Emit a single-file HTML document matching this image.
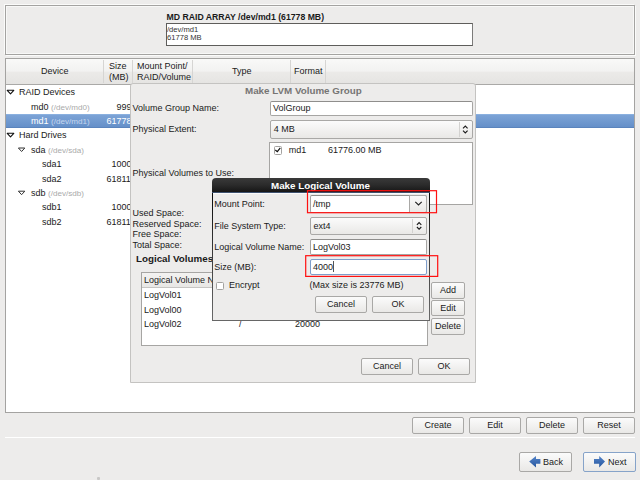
<!DOCTYPE html>
<html><head><meta charset="utf-8">
<style>
*{margin:0;padding:0;box-sizing:border-box}
html,body{width:640px;height:480px;overflow:hidden;background:#edeceb;font-family:"Liberation Sans",sans-serif;font-size:9px;color:#1a1a1a}
.a{position:absolute}
.t{position:absolute;white-space:pre;line-height:10px}
.btn{position:absolute;border:1px solid #a9a8a6;border-radius:2px;background:linear-gradient(#fbfbfb,#e9e8e6);text-align:center;line-height:15px;color:#1a1a1a}
.entry{position:absolute;background:#fff;border:1px solid #a6a5a3;border-radius:2px;border-top-color:#8f8e8c}
.combo{position:absolute;border:1px solid #a9a8a6;border-radius:2px;background:linear-gradient(#fbfbfb,#e9e8e6)}
.g{color:#aaaaaa;font-size:8.1px}
</style></head><body>

<!-- top frame -->
<div class="a" style="left:5px;top:5px;width:630px;height:50px;border:1px solid #a4a3a1;box-shadow:-1px -1px 0 #fbfbfa,1px 1px 0 #fbfbfa,inset 1px 1px 0 #f8f8f7,inset -1px -1px 0 #f8f8f7"></div>
<div class="t" style="left:166.5px;top:12.3px;font-weight:bold;font-size:8.7px">MD RAID ARRAY /dev/md1 (61778 MB)</div>
<div class="a" style="left:166px;top:23px;width:307px;height:23px;background:#fff;border:1px solid #5e5d5b;border-right-color:#7c7b7a"></div>
<div class="t" style="left:167px;top:25.5px;font-size:7.6px;line-height:8.4px;color:#333">/dev/md1
61778 MB</div>

<!-- tree view -->
<div class="a" style="left:5px;top:58px;width:630px;height:355px;background:#fff;border:1px solid #a4a3a1"></div>
<div class="a" style="left:6px;top:59px;width:628px;height:26px;background:linear-gradient(#f9f9f8 0%,#f2f2f1 48%,#ebeae8 54%,#e5e4e2 100%);border-bottom:1px solid #aaa9a7"></div>
<div class="a" style="left:103px;top:60px;width:1px;height:23px;background:#d6d5d3"></div>
<div class="a" style="left:132px;top:60px;width:1px;height:23px;background:#d6d5d3"></div>
<div class="a" style="left:192px;top:60px;width:1px;height:23px;background:#d6d5d3"></div>
<div class="a" style="left:290px;top:60px;width:1px;height:23px;background:#d6d5d3"></div>
<div class="a" style="left:325px;top:60px;width:1px;height:23px;background:#d6d5d3"></div>
<div class="t" style="left:41px;top:66px">Device</div>
<div class="t" style="left:109px;top:61px;line-height:10.5px">Size
(MB)</div>
<div class="t" style="left:137px;top:61px;line-height:10.5px">Mount Point/
RAID/Volume</div>
<div class="t" style="left:232px;top:66px">Type</div>
<div class="t" style="left:294px;top:66px">Format</div>

<!-- tree rows -->
<div class="a" style="left:6px;top:114px;width:628px;height:14px;background:linear-gradient(#7ca3d6,#6590c9);border-top:1px solid #8ab0df;border-bottom:1px solid #5a84bd"></div>
<svg class="a" style="left:0;top:0" width="140" height="240">
<path d="M7.2 90.3h6.6l-3.3 3.6z" fill="none" stroke="#111" stroke-width="1.1" stroke-linejoin="round"/>
<path d="M7.2 133.3h6.6l-3.3 3.6z" fill="none" stroke="#111" stroke-width="1.1" stroke-linejoin="round"/>
<path d="M18.4 148h6.4l-3.2 3.5z" fill="none" stroke="#333" stroke-width="1" stroke-linejoin="round"/>
<path d="M18.4 191.2h6.4l-3.2 3.5z" fill="none" stroke="#333" stroke-width="1" stroke-linejoin="round"/>
</svg>
<div class="t" style="left:19px;top:87.2px">RAID Devices</div>
<div class="t" style="left:31px;top:101.6px">md0 <span class="g">(/dev/md0)</span></div>
<div class="t" style="left:116.4px;top:101.6px">999</div>
<div class="t" style="left:31px;top:116.0px;color:#fff">md1 <span class="g" style="color:#c6d6ee">(/dev/md1)</span></div>
<div class="t" style="left:106.5px;top:116.0px;color:#fff">61778</div>
<div class="t" style="left:19px;top:130.4px">Hard Drives</div>
<div class="t" style="left:31px;top:144.8px">sda <span class="g">(/dev/sda)</span></div>
<div class="t" style="left:42px;top:159.2px">sda1</div>
<div class="t" style="left:111.4px;top:159.2px">1000</div>
<div class="t" style="left:42px;top:173.6px">sda2</div>
<div class="t" style="left:106.5px;top:173.6px">61811</div>
<div class="t" style="left:31px;top:188.0px">sdb <span class="g">(/dev/sdb)</span></div>
<div class="t" style="left:42px;top:202.4px">sdb1</div>
<div class="t" style="left:111.4px;top:202.4px">1000</div>
<div class="t" style="left:42px;top:216.8px">sdb2</div>
<div class="t" style="left:106.5px;top:216.8px">61811</div>

<!-- bottom buttons -->
<div class="btn" style="left:412px;top:417px;width:52px;height:17px">Create</div>
<div class="btn" style="left:469px;top:417px;width:52px;height:17px">Edit</div>
<div class="btn" style="left:526px;top:417px;width:52px;height:17px">Delete</div>
<div class="btn" style="left:583px;top:417px;width:52px;height:17px">Reset</div>
<div class="a" style="left:5px;top:437px;width:630px;height:1px;background:#cfcecc;border-bottom:1px solid #fff"></div>
<div class="btn" style="left:519px;top:452px;width:53px;height:20px;line-height:18px;text-align:left;padding-left:23px">Back</div>
<div class="btn" style="left:583px;top:452px;width:53px;height:20px;line-height:18px;text-align:left;padding-left:24px;border-color:#86a3c9">Next</div>
<svg class="a" style="left:0;top:440px" width="640" height="40">
<defs><linearGradient id="ag" x1="0" y1="0" x2="0" y2="1"><stop offset="0" stop-color="#5584c8"/><stop offset="1" stop-color="#24559e"/></linearGradient></defs>
<path d="M529.2 21.5L536 16v2.9h4.4v4.9H536v3.6z" fill="url(#ag)"/>
<path d="M605 21.5L599.2 16v2.9h-5.2v4.9h5.2v3.6z" fill="url(#ag)"/>
</svg>

<!-- LVM dialog -->
<div class="a" style="left:130px;top:83px;width:346px;height:300px;background:#edeceb;border:1px solid #c4c3c1;border-radius:3px 3px 0 0"></div>
<div class="t" style="left:245px;top:86px;font-weight:bold;font-size:9.8px;color:#767574">Make LVM Volume Group</div>
<div class="t" style="left:132.5px;top:103px">Volume Group Name:</div>
<div class="entry" style="left:270px;top:101px;width:203px;height:15px"></div>
<div class="t" style="left:273px;top:103px">VolGroup</div>
<div class="t" style="left:132.5px;top:124px">Physical Extent:</div>
<div class="combo" style="left:270px;top:120px;width:203px;height:19px"></div>
<div class="a" style="left:459px;top:122px;width:1px;height:15px;background:#d3d2d0"></div>
<svg class="a" style="left:461px;top:123px" width="9" height="13"><path d="M2 5.3L4.3 3L6.6 5.3M2 7.7L4.3 10L6.6 7.7" fill="none" stroke="#1a1a1a" stroke-width="1.1"/></svg>
<div class="t" style="left:273.8px;top:124.2px">4 MB</div>
<div class="t" style="left:132.5px;top:168px">Physical Volumes to Use:</div>
<div class="a" style="left:269px;top:142px;width:204px;height:63px;background:#fff;border:1px solid #a6a5a3"></div>
<div class="a" style="left:274px;top:146px;width:8px;height:9px;background:#fff;border:1px solid #a3a2a0;border-radius:1.5px"></div>
<svg class="a" style="left:274px;top:146px" width="9" height="9"><path d="M1.3 4L3.3 5.6L6.3 1.8" fill="none" stroke="#111" stroke-width="1.2"/></svg>
<div class="t" style="left:288.7px;top:145px">md1</div>
<div class="t" style="left:328px;top:145px">61776.00 MB</div>
<div class="t" style="left:132.5px;top:208px">Used Space:</div>
<div class="t" style="left:132.5px;top:218.5px">Reserved Space:</div>
<div class="t" style="left:132.5px;top:229px">Free Space:</div>
<div class="t" style="left:132.5px;top:239.5px">Total Space:</div>
<div class="t" style="left:136px;top:253.5px;font-weight:bold;font-size:9.8px">Logical Volumes</div>
<div class="a" style="left:141px;top:272px;width:287px;height:74px;background:#fff;border:1px solid #a6a5a3"></div>
<div class="a" style="left:142px;top:273px;width:285px;height:15px;background:linear-gradient(#f3f2f1,#e8e7e5);border-bottom:1px solid #c6c5c3"></div>
<div class="t" style="left:144px;top:275px">Logical Volume Name</div>
<div class="t" style="left:144px;top:290px">LogVol01</div>
<div class="t" style="left:144px;top:304.5px">LogVol00</div>
<div class="t" style="left:144px;top:319px">LogVol02</div>
<div class="t" style="left:239px;top:319px">/</div>
<div class="t" style="left:295px;top:319px">20000</div>
<div class="btn" style="left:431px;top:282px;width:34px;height:16.5px">Add</div>
<div class="btn" style="left:431px;top:300px;width:34px;height:16px">Edit</div>
<div class="btn" style="left:431px;top:318px;width:34px;height:17px;line-height:15px">Delete</div>
<div class="btn" style="left:361px;top:358px;width:52px;height:17px">Cancel</div>
<div class="btn" style="left:418px;top:358px;width:52px;height:17px">OK</div>
<!-- Make Logical Volume dialog -->
<div class="a" style="left:212px;top:178px;width:218px;height:143px;background:#edeceb;border-radius:4px 4px 0 0;box-shadow:inset 1px 0 0 #fff"></div>
<div class="a" style="left:212px;top:182px;width:1px;height:139px;background:linear-gradient(#000,#2a2a2a 35%,#6a6a6a)"></div>
<div class="a" style="left:429px;top:182px;width:1px;height:139px;background:linear-gradient(#000,#2a2a2a 35%,#6a6a6a)"></div>
<div class="a" style="left:212px;top:320px;width:218px;height:1px;background:#666"></div>
<div class="a" style="left:213px;top:193px;width:216px;height:1px;background:#fafafa"></div>
<div class="a" style="left:212px;top:178px;width:218px;height:15px;border-radius:4px 4px 0 0;background:linear-gradient(#3a3a3a,#2b2b2b 50%,#161616);border-bottom:1px solid #3e5270"></div>
<div class="t" style="left:271px;top:180.5px;font-weight:bold;font-size:9.8px;color:#fff">Make Logical Volume</div>
<div class="t" style="left:214.3px;top:199px">Mount Point:</div>
<div class="t" style="left:214.3px;top:221px">File System Type:</div>
<div class="t" style="left:214.3px;top:242px">Logical Volume Name:</div>
<div class="t" style="left:214.3px;top:262px">Size (MB):</div>
<div class="a" style="left:216px;top:281.5px;width:8px;height:8px;background:#fff;border:1px solid #a3a2a0;border-radius:1.5px"></div>
<div class="t" style="left:229px;top:280px">Encrypt</div>
<div class="t" style="left:309.5px;top:280px">(Max size is 23776 MB)</div>
<!-- mount point combo entry -->
<div class="entry" style="left:310px;top:195px;width:117px;height:18px"></div>
<div class="combo" style="left:409px;top:195px;width:18px;height:18px;border-radius:0 2px 2px 0"></div>
<svg class="a" style="left:414px;top:200px" width="9" height="7"><path d="M1.3 1.8L4.5 5L7.7 1.8" fill="none" stroke="#222" stroke-width="1.15"/></svg>
<div class="t" style="left:313px;top:199px">/tmp</div>
<div class="combo" style="left:310px;top:217px;width:117px;height:18px"></div>
<div class="a" style="left:412px;top:219px;width:1px;height:14px;background:#d3d2d0"></div>
<svg class="a" style="left:415px;top:220px" width="9" height="12"><path d="M1.9 4.9L4.1 2.6L6.3 4.9M1.9 7L4.1 9.2L6.3 7" fill="none" stroke="#1a1a1a" stroke-width="1.1"/></svg>
<div class="t" style="left:313.5px;top:221px">ext4</div>
<div class="entry" style="left:310px;top:239px;width:117px;height:16px"></div>
<div class="t" style="left:313px;top:242px">LogVol03</div>
<div class="entry" style="left:310px;top:259px;width:117px;height:16px;border-color:#7e9ecb"></div>
<div class="t" style="left:313px;top:262px">4000</div>
<div class="a" style="left:333px;top:261px;width:1px;height:11px;background:#555"></div>
<div class="btn" style="left:315px;top:296px;width:52px;height:17px">Cancel</div>
<div class="btn" style="left:372px;top:296px;width:52px;height:17px">OK</div>
<svg class="a" style="left:0;top:0" width="640" height="480">
<rect x="307.5" y="190.7" width="129" height="22" fill="none" stroke="#ff1010" stroke-width="1.2"/>
<rect x="305.7" y="255.7" width="132" height="20.7" fill="none" stroke="#ff1010" stroke-width="1.2"/>
</svg>
<div class="a" style="left:97px;top:477px;width:3px;height:3px;border-radius:1px;background:#c9c8c7"></div>
</body></html>
